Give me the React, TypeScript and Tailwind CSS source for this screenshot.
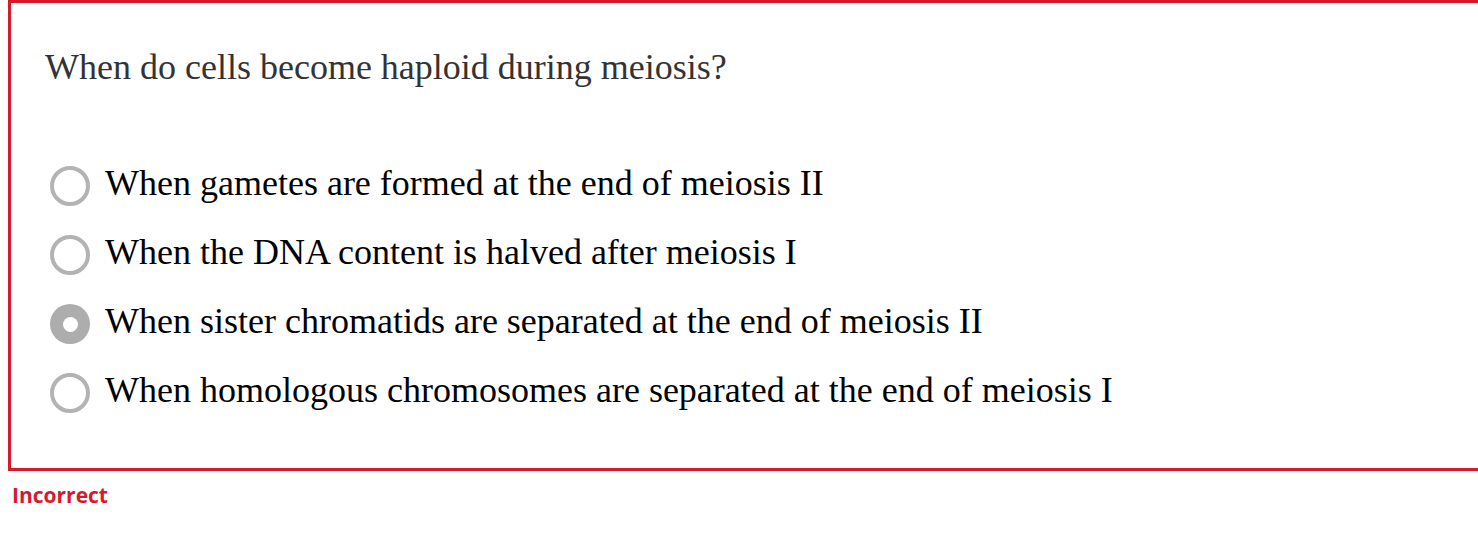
import React from "react";

const options = [
  { text: "When gametes are formed at the end of meiosis II", checked: false },
  { text: "When the DNA content is halved after meiosis I", checked: false },
  { text: "When sister chromatids are separated at the end of meiosis II", checked: true },
  { text: "When homologous chromosomes are separated at the end of meiosis I", checked: false },
];

function Radio({ checked }: { checked: boolean }) {
  if (checked) {
    return (
      <div className="mt-[3px] ml-[5px] flex h-[40px] w-[40px] shrink-0 items-center justify-center rounded-full bg-[#adadad]">
        <div className="h-[15px] w-[15px] rounded-full bg-white" />
      </div>
    );
  }
  return (
    <div className="mt-[3px] ml-[5px] h-[40px] w-[40px] shrink-0 rounded-full border-[4px] border-[#b3b3b3] bg-white" />
  );
}

export default function App() {
  return (
    <div className="w-[1478px] overflow-hidden bg-white">
      <div className="ml-2 w-[1500px] border-t-[3px] border-l-[3px] border-b-[3px] border-[#d71a2b] pl-[34px] pt-[44px] pb-[55px]">
        <p
          className="text-[36px] leading-[40px] text-[#333333]"
          style={{ fontFamily: '"Liberation Serif", "Times New Roman", serif' }}
        >
          When do cells become haploid during meiosis?
        </p>
        <div className="mt-[76px] flex flex-col gap-[26px]">
          {options.map((o) => (
            <label key={o.text} className="flex items-start gap-[15px]">
              <Radio checked={o.checked} />
              <span
                className="text-[36px] leading-[40px] text-black whitespace-nowrap"
                style={{ fontFamily: '"Liberation Serif", "Times New Roman", serif' }}
              >
                {o.text}
              </span>
            </label>
          ))}
        </div>
      </div>
      <div
        className="mt-[9px] pl-[12px] text-[21px] leading-[30px] font-bold text-[#d71a2b]"
        style={{ fontFamily: '"Open Sans", sans-serif' }}
      >
        Incorrect
      </div>
    </div>
  );
}
